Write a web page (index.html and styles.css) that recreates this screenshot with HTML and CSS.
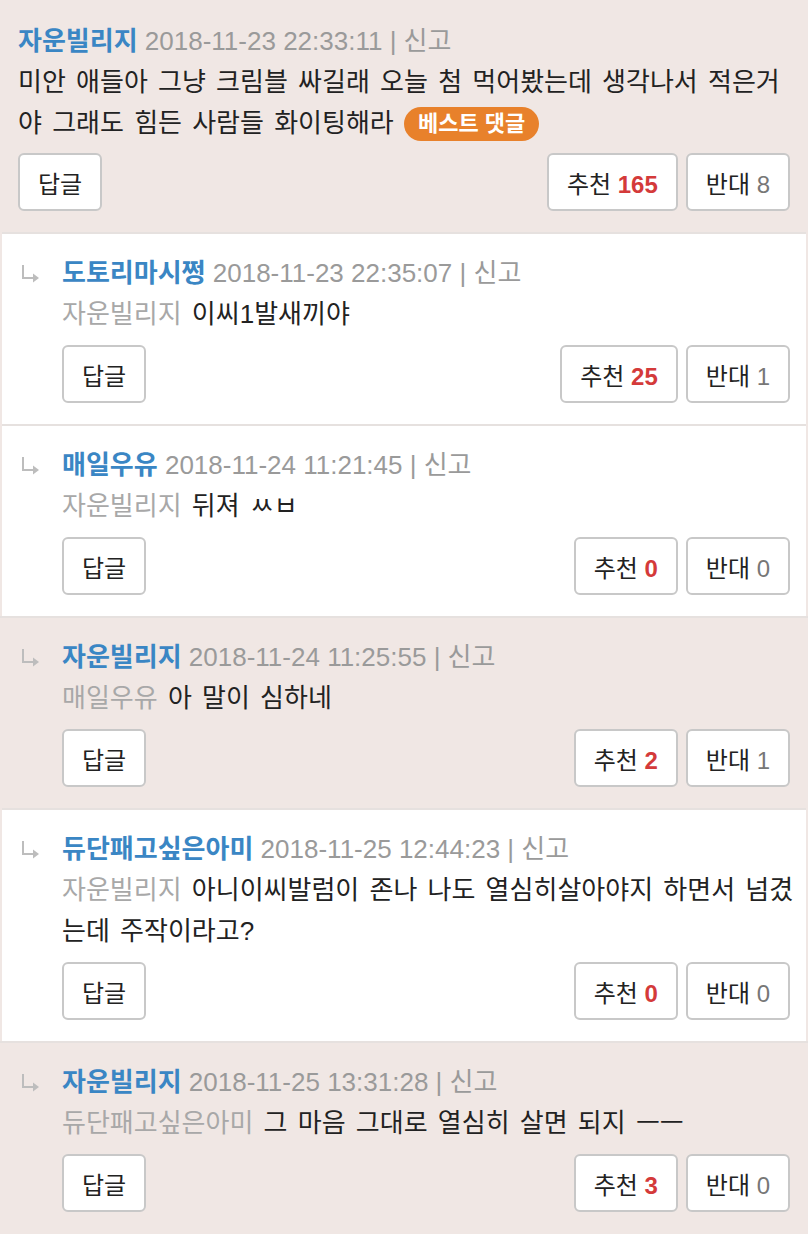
FILE: index.html
```html
<!DOCTYPE html>
<html lang="ko">
<head>
  <meta charset="UTF-8" />
  <meta name="viewport" content="width=device-width, initial-scale=1.0" />
  <title>댓글</title>
  <link rel="stylesheet" href="styles.css">
</head>
<body>
  <div class="comments">
    <!-- Best comment -->
    <div class="comment best">
      <div class="body">
        <p class="meta"><span class="name">자운빌리지</span> <span class="date">2018-11-23 22:33:11 | 신고</span></p>
        <p class="text">미안 애들아 그냥 크림블 싸길래 오늘 첨 먹어봤는데 생각나서 적은거야 그래도 힘든 사람들 화이팅해라 <span class="badge">베스트 댓글</span></p>
        <div class="actions">
          <button class="btn">답글</button>
          <div class="votes">
            <button class="btn">추천 <b class="up">165</b></button>
            <button class="btn">반대 <span class="down">8</span></button>
          </div>
        </div>
      </div>
    </div>

    <!-- Replies -->
    <div class="comment reply">
      <svg class="arrow" width="20" height="20" viewBox="0 0 20 20"><path d="M3 1v13h12" fill="none" stroke="#bdbdbd" stroke-width="2"/><path d="M13 9.5l6 4.5-6 4.5z" fill="#bdbdbd"/></svg>
      <div class="body">
        <p class="meta"><span class="name">도토리마시쩡</span> <span class="date">2018-11-23 22:35:07 | 신고</span></p>
        <p class="text"><span class="to">자운빌리지</span> 이씨1발새끼야</p>
        <div class="actions">
          <button class="btn">답글</button>
          <div class="votes">
            <button class="btn">추천 <b class="up">25</b></button>
            <button class="btn">반대 <span class="down">1</span></button>
          </div>
        </div>
      </div>
    </div>

    <div class="comment reply">
      <svg class="arrow" width="20" height="20" viewBox="0 0 20 20"><path d="M3 1v13h12" fill="none" stroke="#bdbdbd" stroke-width="2"/><path d="M13 9.5l6 4.5-6 4.5z" fill="#bdbdbd"/></svg>
      <div class="body">
        <p class="meta"><span class="name">매일우유</span> <span class="date">2018-11-24 11:21:45 | 신고</span></p>
        <p class="text"><span class="to">자운빌리지</span> 뒤져 ㅆㅂ</p>
        <div class="actions">
          <button class="btn">답글</button>
          <div class="votes">
            <button class="btn">추천 <b class="up">0</b></button>
            <button class="btn">반대 <span class="down">0</span></button>
          </div>
        </div>
      </div>
    </div>

    <div class="comment reply mine">
      <svg class="arrow" width="20" height="20" viewBox="0 0 20 20"><path d="M3 1v13h12" fill="none" stroke="#bdbdbd" stroke-width="2"/><path d="M13 9.5l6 4.5-6 4.5z" fill="#bdbdbd"/></svg>
      <div class="body">
        <p class="meta"><span class="name">자운빌리지</span> <span class="date">2018-11-24 11:25:55 | 신고</span></p>
        <p class="text"><span class="to">매일우유</span> 아 말이 심하네</p>
        <div class="actions">
          <button class="btn">답글</button>
          <div class="votes">
            <button class="btn">추천 <b class="up">2</b></button>
            <button class="btn">반대 <span class="down">1</span></button>
          </div>
        </div>
      </div>
    </div>

    <div class="comment reply">
      <svg class="arrow" width="20" height="20" viewBox="0 0 20 20"><path d="M3 1v13h12" fill="none" stroke="#bdbdbd" stroke-width="2"/><path d="M13 9.5l6 4.5-6 4.5z" fill="#bdbdbd"/></svg>
      <div class="body">
        <p class="meta"><span class="name">듀단패고싶은아미</span> <span class="date">2018-11-25 12:44:23 | 신고</span></p>
        <p class="text"><span class="to">자운빌리지</span> 아니이씨발럼이 존나 나도 열심히살아야지 하면서 넘겼는데 주작이라고?</p>
        <div class="actions">
          <button class="btn">답글</button>
          <div class="votes">
            <button class="btn">추천 <b class="up">0</b></button>
            <button class="btn">반대 <span class="down">0</span></button>
          </div>
        </div>
      </div>
    </div>

    <div class="comment reply mine">
      <svg class="arrow" width="20" height="20" viewBox="0 0 20 20"><path d="M3 1v13h12" fill="none" stroke="#bdbdbd" stroke-width="2"/><path d="M13 9.5l6 4.5-6 4.5z" fill="#bdbdbd"/></svg>
      <div class="body">
        <p class="meta"><span class="name">자운빌리지</span> <span class="date">2018-11-25 13:31:28 | 신고</span></p>
        <p class="text"><span class="to">듀단패고싶은아미</span> 그 마음 그대로 열심히 살면 되지 ㅡㅡ</p>
        <div class="actions">
          <button class="btn">답글</button>
          <div class="votes">
            <button class="btn">추천 <b class="up">3</b></button>
            <button class="btn">반대 <span class="down">0</span></button>
          </div>
        </div>
      </div>
    </div>
  </div>
</body>
</html>
```

FILE: styles.css
```css
/* Global */
body {
  margin: 0;
  font-family: "Liberation Sans", "Noto Sans CJK KR", sans-serif;
  font-size: 26px;
  background-color: #f0e7e4;
  color: #222;
}
.comments {
  width: 808px;
}
p {
  margin: 0;
}
/* Comment rows */
.comment {
  display: flex;
  padding: 19px 18px 21px 18px;
  background-color: #f0e7e4;
}
.comment + .comment {
  border-top: 2px solid #e6e1df;
}
.comment.best {
  padding-top: 21px;
}
.comment.reply {
  background-color: #fff;
  margin: 0 2px;
  padding-left: 16px;
  padding-right: 16px;
}
.comment.reply.mine {
  background-color: #f0e7e4;
  margin: 0;
  padding-left: 18px;
  padding-right: 18px;
}
.arrow {
  flex: none;
  margin: 11px 22px 0 2px;
}
.body {
  flex: 1;
  min-width: 0;
}
.meta,
.text {
  line-height: 41px;
}
.text {
  word-spacing: 3px;
  margin-right: -6px;
}
.name {
  color: #3a86c4;
  font-weight: bold;
}
.date {
  color: #9a9a9a;
}
.to {
  color: #a8a8a8;
}
.badge {
  display: inline-block;
  background-color: #e8812b;
  color: #fff;
  font-weight: bold;
  font-size: 22px;
  line-height: 34px;
  word-spacing: 0;
  padding: 0 14px;
  border-radius: 17px;
  vertical-align: 1px;
}
/* Buttons */
.actions {
  display: flex;
  justify-content: space-between;
  margin-top: 10px;
}
.best .actions {
  margin-top: 9px;
}
.votes {
  display: flex;
  gap: 8px;
}
.btn {
  height: 58px;
  padding: 0 18px;
  background-color: #fff;
  border: 2px solid #c8c8c8;
  border-radius: 6px;
  font-family: inherit;
  font-size: 24px;
  color: #222;
}
.up {
  color: #d43a3a;
}
.down {
  color: #777;
}
```
